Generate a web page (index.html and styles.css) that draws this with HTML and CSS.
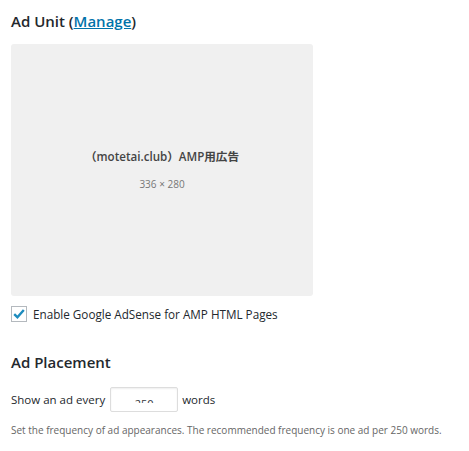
FILE: index.html
```html
<!DOCTYPE html>
<html>
<head>
<meta charset="utf-8">
<link rel="stylesheet" href="styles.css">
</head>
<body>
<div class="page">
  <h2 class="heading">Ad Unit (<a class="link" href="#">Manage</a>)</h2>
  <div class="ad-box">
    <div class="ad-name">（motetai.club）AMP用広告</div>
    <div class="ad-size">336 × 280</div>
  </div>
  <label class="check-row">
    <span class="checkbox">
      <svg width="14" height="14" viewBox="0 0 14 14"><path d="M2.2 7.2 L5.4 10.2 L11.8 3" fill="none" stroke="#1e8cbe" stroke-width="2.4"/></svg>
    </span>
    <span class="check-label">Enable Google AdSense for AMP HTML Pages</span>
  </label>
  <h2 class="heading heading-2">Ad Placement</h2>
  <div class="field-row">
    <span>Show an ad every</span>
    <span class="input"><span class="input-clip"><span class="input-text">250</span></span></span>
    <span>words</span>
  </div>
  <p class="description">Set the frequency of ad appearances. The recommended frequency is one ad per 250 words.</p>
</div>
</body>
</html>
```
FILE: styles.css
```css
html, body {
  margin: 0;
  padding: 0;
  background: #fff;
}
.page {
  padding: 10px 11px 0 11px;
  font-family: "Open Sans", "Noto Sans CJK JP", sans-serif;
  color: #23282d;
}
.heading {
  margin: 0;
  font-size: 15px;
  font-weight: 600;
  line-height: 22px;
  color: #23282d;
}
.link {
  color: #0073aa;
  text-decoration: underline;
}
.ad-box {
  margin-top: 12px;
  width: 302px;
  height: 252px;
  background: #f0f0f0;
  border-radius: 3px;
  display: flex;
  flex-direction: column;
  align-items: center;
  justify-content: center;
}
.ad-name {
  font-family: "Open Sans", "Noto Sans CJK JP", sans-serif;
  font-size: 11.6px;
  font-weight: 600;
  color: #444;
  line-height: 16px;
  margin-top: 0;
}
.ad-size {
  font-size: 10px;
  color: #777;
  margin-top: 12px;
  line-height: 14px;
}
.check-row {
  display: flex;
  align-items: center;
  margin-top: 9px;
  font-size: 11.7px;
  color: #23282d;
}
.checkbox {
  width: 14px;
  height: 14px;
  border: 1px solid #b4b9be;
  background: #fff;
  display: flex;
  align-items: center;
  justify-content: center;
  margin-right: 6px;
}
.check-label {
  line-height: 18px;
}
.heading-2 {
  margin-top: 28px;
}
.field-row {
  display: flex;
  align-items: center;
  margin-top: 14px;
  font-size: 11.5px;
  color: #23282d;
}
.input {
  width: 66px;
  height: 23px;
  border: 1px solid #ddd;
  border-radius: 2px;
  margin: 0 4px 0 5px;
  box-shadow: inset 0 1px 2px rgba(0,0,0,0.07);
}
.input-clip {
  display: block;
  height: 15px;
  overflow: hidden;
}
.input-text {
  display: block;
  text-align: center;
  font-size: 11px;
  line-height: 16px;
  padding-top: 8px;
  color: #32373c;
}
.description {
  margin: 10px 0 0 0;
  font-size: 10px;
  color: #666;
  line-height: 16px;
  white-space: nowrap;
}
```
